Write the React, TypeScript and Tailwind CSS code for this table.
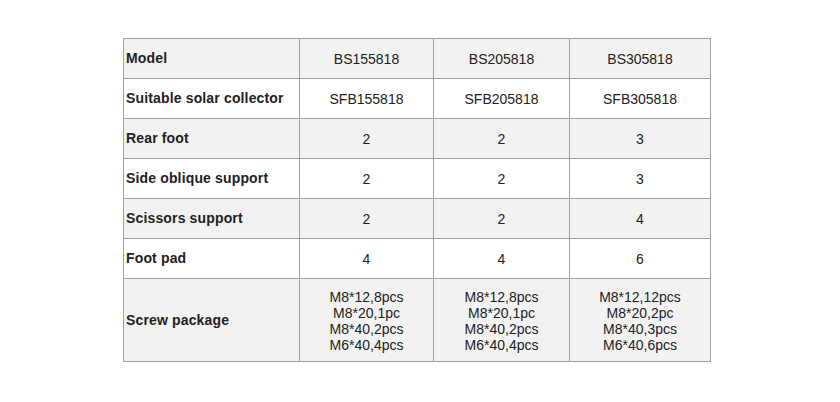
import React from 'react';

const rows: { label: string; values: string[][] }[] = [
  { label: 'Model', values: [['BS155818'], ['BS205818'], ['BS305818']] },
  { label: 'Suitable solar collector', values: [['SFB155818'], ['SFB205818'], ['SFB305818']] },
  { label: 'Rear foot', values: [['2'], ['2'], ['3']] },
  { label: 'Side oblique support', values: [['2'], ['2'], ['3']] },
  { label: 'Scissors support', values: [['2'], ['2'], ['4']] },
  { label: 'Foot pad', values: [['4'], ['4'], ['6']] },
  {
    label: 'Screw package',
    values: [
      ['M8*12,8pcs', 'M8*20,1pc', 'M8*40,2pcs', 'M6*40,4pcs'],
      ['M8*12,8pcs', 'M8*20,1pc', 'M8*40,2pcs', 'M6*40,4pcs'],
      ['M8*12,12pcs', 'M8*20,2pc', 'M8*40,3pcs', 'M6*40,6pcs'],
    ],
  },
];

const App: React.FC = () => {
  return (
    <div className="w-[840px] h-[402px] bg-white pt-[38px] pl-[123px] font-['Liberation_Sans',Arial,sans-serif] text-[14px] text-[#222]">
      <table className="table-fixed border-collapse w-[587px]">
        <colgroup>
          <col className="w-[176px]" />
          <col className="w-[134px]" />
          <col className="w-[136px]" />
          <col className="w-[141px]" />
        </colgroup>
        <tbody>
          {rows.map((row, i) => (
            <tr key={row.label} className={i % 2 === 0 ? 'bg-[#f2f2f2]' : 'bg-white'}>
              <td className={`border border-[#a0a0a0] pl-[2px] font-bold tracking-[0.15px] ${i === rows.length - 1 ? 'h-[83px]' : 'h-[40px]'}`}>
                {row.label}
              </td>
              {row.values.map((lines, j) => (
                <td key={j} className="border border-[#a0a0a0] text-center leading-[16px] pt-[1px]">
                  {lines.map((l) => (
                    <div key={l}>{l}</div>
                  ))}
                </td>
              ))}
            </tr>
          ))}
        </tbody>
      </table>
    </div>
  );
};

export default App;
